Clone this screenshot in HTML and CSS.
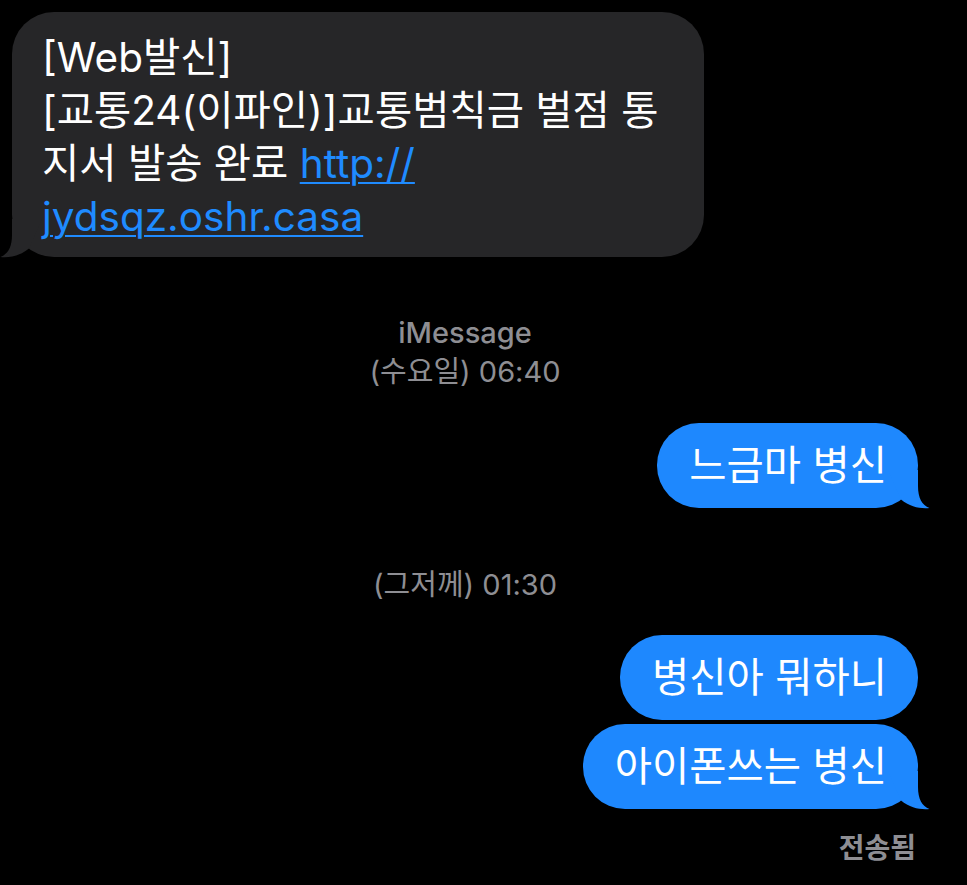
FILE: index.html
```html
<!DOCTYPE html>
<html lang="ko">
<head>
    <meta charset="UTF-8">
    <meta name="viewport" content="width=device-width, initial-scale=1.0">
    <title>메시지</title>
    <link rel="stylesheet" href="styles.css">
</head>
<body>
    <div class="thread">
        <div class="bubble received">
            [Web발신]<br>
            [교통24(이파인)]교통범칙금 벌점 통<br>
            지서 발송 완료 <a href="#" class="link">http://<br>jydsqz.oshr.casa</a>
            <svg class="tail" viewBox="0 0 42 38" aria-hidden="true"><path d="M0 0H30V16C30 28 34 35 41.5 38C33 39 22 37 13 29.5L0 0Z"/></svg>
        </div>

        <div class="stamp stamp-first">
            <span class="service">iMessage</span>
            <span>(수요일) 06:40</span>
        </div>

        <div class="bubble sent">
            느금마 병신
            <svg class="tail" viewBox="0 0 42 38" aria-hidden="true"><path d="M0 0H30V16C30 28 34 35 41.5 38C33 39 22 37 13 29.5L0 0Z"/></svg>
        </div>

        <div class="stamp">
            <span>(그저께) 01:30</span>
        </div>

        <div class="bubble sent">병신아 뭐하니</div>
        <div class="bubble sent last">
            아이폰쓰는 병신
            <svg class="tail" viewBox="0 0 42 38" aria-hidden="true"><path d="M0 0H30V16C30 28 34 35 41.5 38C33 39 22 37 13 29.5L0 0Z"/></svg>
        </div>

        <div class="status">전송됨</div>
    </div>
</body>
</html>
```

FILE: styles.css
```css
* {
    margin: 0;
    padding: 0;
    box-sizing: border-box;
}

body {
    background: #000;
    color: #fff;
    font-family: "Inter", "Noto Sans CJK KR", sans-serif;
    min-height: 100vh;
}

.thread {
    display: flex;
    flex-direction: column;
    padding: 12px 49px 0 12px;
}

.bubble {
    position: relative;
    font-size: 40.5px;
    line-height: 53px;
    border-radius: 42px;
}

.received {
    align-self: flex-start;
    width: 692px;
    padding: 19px 20px 14px 30px;
    background: #262628;
    white-space: nowrap;
}

.sent {
    align-self: flex-end;
    height: 85px;
    padding: 16px 31px 0 32px;
    background: #1e88fe;
    white-space: nowrap;
}

.sent + .sent {
    margin-top: 4px;
}

.link {
    color: #1f8bff;
    text-decoration: underline;
    text-decoration-thickness: 2px;
    text-underline-offset: 4px;
}

.tail {
    position: absolute;
    bottom: 0;
    width: 42px;
    height: 38px;
    overflow: visible;
}

.sent .tail {
    right: -12px;
    fill: #1e88fe;
}

.received .tail {
    left: -12px;
    fill: #262628;
    transform: scaleX(-1);
}

.stamp {
    display: flex;
    flex-direction: column;
    align-items: center;
    margin: 57px 0 31px;
    color: #8e8e93;
    font-size: 29px;
    line-height: 39px;
}

.stamp-first {
    margin: 56px 0 32px;
}

.service {
    font-weight: 500;
}

.status {
    align-self: flex-end;
    margin: 19px 2px 0 0;
    color: #8e8e93;
    font-size: 28px;
    font-weight: 600;
    line-height: 40px;
}
```
